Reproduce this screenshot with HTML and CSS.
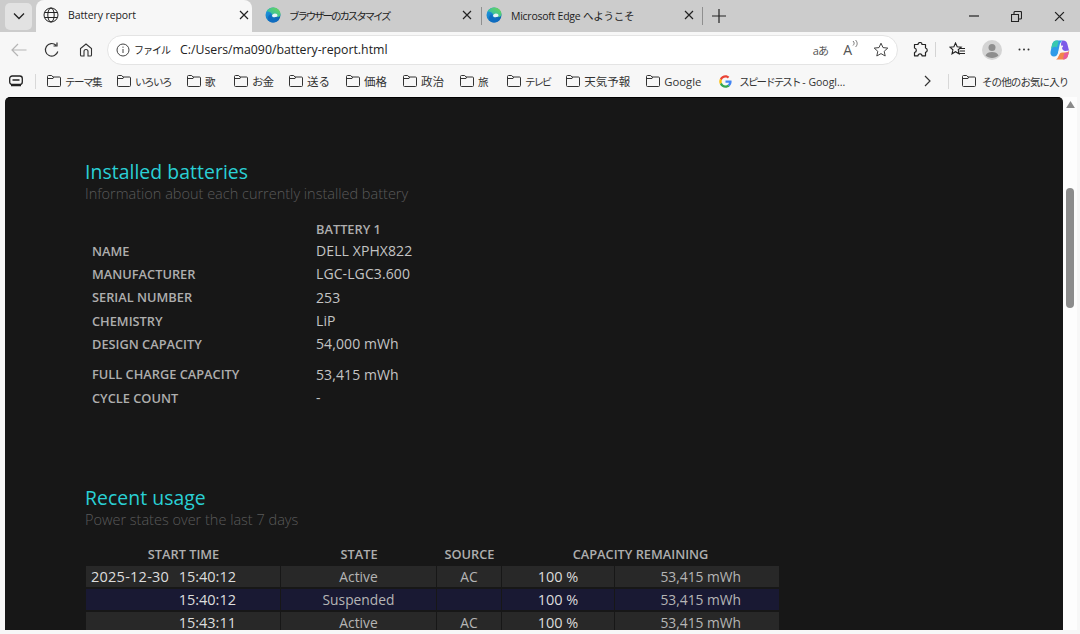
FILE: index.html
```html
<!DOCTYPE html>
<html lang="ja">
<head>
<meta charset="utf-8">
<title>Battery report</title>
<link rel="stylesheet" href="styles.css">
</head>
<body>
<svg class="defs" width="0" height="0" aria-hidden="true">
  <defs>
    <linearGradient id="edgeA" x1="0" y1="0" x2="1" y2="1"><stop offset="0" stop-color="#1f9fe6"/><stop offset="1" stop-color="#0c59a4"/></linearGradient>
    <linearGradient id="edgeB" x1="0" y1="1" x2="1" y2="0"><stop offset="0" stop-color="#1fb5c9"/><stop offset="1" stop-color="#6fd84e"/></linearGradient>
    <symbol id="edge" viewBox="0 0 16 16">
      <circle cx="8" cy="8" r="7.500" fill="url(#edgeA)"/>
      <path d="M1.500 4.500C3 2 5.500.5 8.500.5c4 0 7 3 7 6.500 0 1.500-.8 2.500-2 3L7.500 9C7.500 6.500 5 4.500 1.500 4.500z" fill="url(#edgeB)"/>
      <path d="M6.500 9.500c.5 2 2.500 3 4.500 3 1.300 0 2.500-.4 3.500-1.100-1 2.500-3.500 4.100-6.500 4.100-3 0-5-2-5-4.500 0-1.500 1-3 2.500-3.500 0 .5.300 1.300 1 2z" fill="#0f6cc0"/>
      <path d="M7 9c0-1.500 1.500-2.500 3-2.500s2.500 .8 2.500 2c0 .6-.3 1-.8 1.300C10 10.500 7.500 10.500 7 9z" fill="#e9f3f6"/>
    </symbol>
    <symbol id="folder" viewBox="0 0 16 14">
      <path d="M1.500 11.500V2.500a1 1 0 0 1 1-1h3.200l1.300 1.500h6.500a1 1 0 0 1 1 1v7.500a1 1 0 0 1-1 1h-11a1 1 0 0 1-1-1zM1.500 4.500H7l.6-1.400" fill="none" stroke="#333" stroke-width="1"/>
    </symbol>
    <symbol id="close" viewBox="0 0 10 10">
      <path d="M1 1l8 8M9 1l-8 8" fill="none" stroke="#222" stroke-width="1.200"/>
    </symbol>
  </defs>
</svg>

<header class="tabstrip">
  <div class="tablist-btn">
    <svg width="12" height="8" viewBox="0 0 12 8"><path d="M1 1.500l5 5 5-5" fill="none" stroke="#222" stroke-width="1.300"/></svg>
  </div>
  <div class="tab tab-active">
    <svg class="favicon" width="16" height="16" viewBox="0 0 16 16"><g fill="none" stroke="#222" stroke-width="1"><circle cx="8" cy="8" r="7"/><ellipse cx="8" cy="8" rx="3.200" ry="7"/><path d="M1.500 5.500h13M1.500 10.500h13"/></g></svg>
    <span class="tab-title">Battery report</span>
    <svg class="tab-close" width="10" height="10"><use href="#close"/></svg>
  </div>
  <div class="tab tab-second">
    <svg class="favicon" width="16" height="16"><use href="#edge"/></svg>
    <span class="tab-title">ブラウザーのカスタマイズ</span>
    <svg class="tab-close" width="10" height="10"><use href="#close"/></svg>
  </div>
  <div class="tab-sep"></div>
  <div class="tab tab-third">
    <svg class="favicon" width="16" height="16"><use href="#edge"/></svg>
    <span class="tab-title">Microsoft Edge へようこそ</span>
    <svg class="tab-close" width="10" height="10"><use href="#close"/></svg>
  </div>
  <div class="tab-sep"></div>
  <svg class="new-tab" width="14" height="14" viewBox="0 0 14 14"><path d="M7 0v14M0 7h14" stroke="#222" stroke-width="1.200"/></svg>
  <div class="window-controls">
    <svg width="10" height="10" viewBox="0 0 10 10"><path d="M0 5h10" stroke="#222" stroke-width="1.200"/></svg>
    <svg width="11" height="11" viewBox="0 0 11 11"><path d="M.5 3.500h7v7h-7zM3 3.500V1.500a1 1 0 0 1 1-1h5.500a1 1 0 0 1 1 1V7a1 1 0 0 1-1 1h-2" fill="none" stroke="#222" stroke-width="1.100"/></svg>
    <svg width="11" height="11" viewBox="0 0 10 10"><use href="#close"/></svg>
  </div>
</header>

<div class="toolbar">
  <svg class="tool-back" width="16" height="14" viewBox="0 0 16 14"><path d="M15.500 7H1M7 1L1 7l6 6" fill="none" stroke="#b5b5b5" stroke-width="1.200"/></svg>
  <svg class="tool-reload" width="16" height="16" viewBox="0 0 16 16"><path d="M13.800 9.500A6.300 6.300 0 1 1 12 3.200M13 .5v3.500H9.500" fill="none" stroke="#333" stroke-width="1.200"/></svg>
  <svg class="tool-home" width="14" height="14" viewBox="0 0 14 14"><path d="M5 13V8.500a2 2 0 0 1 4 0V13h2.500a1 1 0 0 0 1-1V5.500L7 1 1.500 5.500V12a1 1 0 0 0 1 1z" fill="none" stroke="#333" stroke-width="1.100"/></svg>
  <div class="address">
    <svg class="addr-info" width="14" height="14" viewBox="0 0 14 14"><circle cx="7" cy="7" r="6" fill="none" stroke="#444" stroke-width="1"/><path d="M7 6v4M7 3.600v1.200" stroke="#444" stroke-width="1"/></svg>
    <span class="addr-scheme">ファイル</span>
    <span class="addr-url">C:/Users/ma090/battery-report.html</span>
    <span class="addr-tools">
      <span class="addr-trans">aあ</span>
      <span class="addr-read">A<svg width="6" height="8" viewBox="0 0 6 8"><path d="M1 1c1.500 1.500 1.500 3 0 4.500M3.500 0c2.200 2.200 2.200 5 0 7" fill="none" stroke="#555" stroke-width=".8"/></svg></span>
      <svg width="16" height="16" viewBox="0 0 16 16"><path d="M8 1.200l2 4.400 4.800.5-3.600 3.200 1 4.700L8 11.600l-4.200 2.400 1-4.700L1.200 6.100 6 5.600z" fill="none" stroke="#444" stroke-width="1"/></svg>
    </span>
  </div>
  <svg class="tool-ext" width="16" height="16" viewBox="0 0 16 16"><path d="M6 2.500a2 2 0 0 1 4 0h3.500v3.500a2.200 2.200 0 0 1 0 4.300v3.500H10a2 2 0 0 0-4 0H2.500V10.500a2.300 2.300 0 0 0 0-4.500V2.500z" fill="none" stroke="#222" stroke-width="1.200" stroke-linejoin="round"/></svg>
  <div class="tool-sep"></div>
  <svg class="tool-fav" width="17" height="15" viewBox="0 0 17 15"><path d="M6.500 1l1.700 3.700 4 .4-3 2.700.9 4L6.500 9.700 3 11.800l.9-4-3-2.700 4-.4zM11 6.500h5M10.500 9h5.500M9.500 11.500H16" fill="none" stroke="#222" stroke-width="1.100"/></svg>
  <div class="avatar">
    <svg width="20" height="20" viewBox="0 0 20 20"><circle cx="10" cy="10" r="10" fill="#d4d4d4"/><circle cx="10" cy="7.500" r="3.500" fill="#8e8e8e"/><path d="M3.500 15.500c1-2.500 3.500-3.500 6.500-3.500s5.500 1 6.500 3.500c-1.500 1.500-4 2.500-6.500 2.500s-5-1-6.500-2.500z" fill="#8e8e8e"/></svg>
  </div>
  <svg class="tool-more" width="12" height="3" viewBox="0 0 12 3"><g fill="#333"><circle cx="1.500" cy="1.500" r="1"/><circle cx="6" cy="1.500" r="1"/><circle cx="10.500" cy="1.500" r="1"/></g></svg>
  <svg class="tool-copilot" width="22" height="22" viewBox="0 0 22 22">
    <path d="M8 1.500h6c-2 1-3 2.500-3.500 5L9 14c-.5 2-1.800 3.500-4 3.500-2.500 0-4-2-3.500-4.500l1.500-7C3.500 3.500 5 1.500 8 1.500z" fill="#2f9be8"/>
    <path d="M3 6C3.500 3.500 5 1.500 8 1.500c1 0 1.500.5 1.500 1.500L8 8.500C6 7 4 8 2 10z" fill="#38c9b0"/>
    <path d="M14 1.500c2.500 0 4 1.500 4.500 4l1.500 6-4 .5c-2-.5-3-1.500-3-3.500l-1-3C12 3 13 1.500 14 1.500z" fill="#7b5be8"/>
    <path d="M7 20.500h7c2.500 0 4.500-1.500 5-4l1.500-5.500c-.5 1.500-2 2.500-4 2.500h-3C11 13.500 10 15 9.500 17c-.5 2-1.500 3-2.500 3.500z" fill="#f1864a"/>
    <path d="M14 20.500c2.500 0 4.500-1.500 5-4l.8-3c-1 0-3 0-4.300.5-1 2-1 5-1.500 6.500z" fill="#e85a9b"/>
    <path d="M9 16.500c1-1.500 1.500-4 2.300-6.500.5-1.500 1.300-2.500 2.500-3" fill="none" stroke="#f4f4f4" stroke-width="1.600"/>
  </svg>
</div>

<nav class="bookmarks">
  <svg class="bm-apps" width="14" height="12" viewBox="0 0 14 12"><rect x=".7" y="1" width="12.600" height="8.500" rx="2.500" fill="none" stroke="#222" stroke-width="1.300"/><path d="M3.500 5h7M2 10.500h10" stroke="#222" stroke-width="1.300"/></svg>
  <div class="bm-sep"></div>
  <div class="bm-list">
    <span class="bm"><svg width="16" height="14"><use href="#folder"/></svg><span class="kana">テーマ集</span></span>
    <span class="bm"><svg width="16" height="14"><use href="#folder"/></svg><span class="kana">いろいろ</span></span>
    <span class="bm"><svg width="16" height="14"><use href="#folder"/></svg><span class="one">歌</span></span>
    <span class="bm"><svg width="16" height="14"><use href="#folder"/></svg><span class="okane">お金</span></span>
    <span class="bm"><svg width="16" height="14"><use href="#folder"/></svg><span>送る</span></span>
    <span class="bm"><svg width="16" height="14"><use href="#folder"/></svg><span>価格</span></span>
    <span class="bm"><svg width="16" height="14"><use href="#folder"/></svg><span>政治</span></span>
    <span class="bm"><svg width="16" height="14"><use href="#folder"/></svg><span class="one">旅</span></span>
    <span class="bm"><svg width="16" height="14"><use href="#folder"/></svg><span class="kana terebi">テレビ</span></span>
    <span class="bm"><svg width="16" height="14"><use href="#folder"/></svg><span>天気予報</span></span>
    <span class="bm"><svg width="16" height="14"><use href="#folder"/></svg><span class="latin">Google</span></span>
    <span class="bm bm-g"><svg width="13" height="13" viewBox="0 0 48 48"><path fill="#ea4335" d="M24 9.500c3.900 0 6.600 1.700 8.200 3.100l6-5.900C34.500 3.300 29.700 1 24 1 15 1 7.300 6.100 3.500 13.600l7 5.400C12.300 13.400 17.700 9.500 24 9.500z"/><path fill="#4285f4" d="M46.500 24.500c0-1.700-.2-3-.5-4.300H24v8.400h12.900c-.3 2.100-1.700 5.200-4.800 7.300l6.800 5.300c4.700-4.300 7.600-10.700 7.600-16.700z"/><path fill="#fbbc05" d="M10.500 28.700c-.5-1.400-.7-3-.7-4.700s.3-3.300.7-4.700l-7-5.500C2 16.900 1 20.300 1 24s.9 7.100 2.500 10.200z"/><path fill="#34a853" d="M24 47c6.200 0 11.400-2 15.200-5.600l-6.800-5.300c-2 1.300-4.500 2.300-8.400 2.300-6.300 0-11.700-3.900-13.500-10l-7 5.500C7.300 41.900 15 47 24 47z"/></svg><span class="bm-speed"><span class="kana speed-kana">スピードテスト</span> - Googl...</span></span>
  </div>
  <svg class="bm-more" width="7" height="12" viewBox="0 0 7 12"><path d="M1 1l5 5-5 5" fill="none" stroke="#333" stroke-width="1.200"/></svg>
  <div class="bm-sep bm-sep-right"></div>
  <span class="bm bm-other"><svg width="16" height="14"><use href="#folder"/></svg><span class="other-label">その他のお気に入り</span></span>
</nav>

<div class="viewport">
  <main class="page">
    <h2>Installed batteries</h2>
    <p class="sub">Information about each currently installed battery</p>
    <table class="batteries">
      <thead><tr><th></th><th class="b-head">BATTERY 1</th></tr></thead>
      <tbody>
        <tr><th>NAME</th><td>DELL XPHX822</td></tr>
        <tr><th>MANUFACTURER</th><td>LGC-LGC3.600</td></tr>
        <tr><th>SERIAL NUMBER</th><td>253</td></tr>
        <tr><th>CHEMISTRY</th><td>LiP</td></tr>
        <tr class="tall"><th>DESIGN CAPACITY</th><td>54,000 mWh</td></tr>
        <tr><th>FULL CHARGE CAPACITY</th><td>53,415 mWh</td></tr>
        <tr><th>CYCLE COUNT</th><td>-</td></tr>
      </tbody>
    </table>

    <h2 class="h-usage">Recent usage</h2>
    <p class="sub">Power states over the last 7 days</p>
    <table class="usage">
      <colgroup><col class="c1"><col class="c2"><col class="c3"><col class="c4"><col class="c5"></colgroup>
      <thead><tr><th>START TIME</th><th>STATE</th><th>SOURCE</th><th colspan="2">CAPACITY REMAINING</th></tr></thead>
      <tbody>
        <tr class="odd"><td class="time"><span class="date">2025-12-30</span>15:40:12</td><td class="c">Active</td><td class="c">AC</td><td class="c pct">100 %</td><td class="mwh">53,415 mWh</td></tr>
        <tr class="susp"><td class="time">15:40:12</td><td class="c">Suspended</td><td class="c"></td><td class="c pct">100 %</td><td class="mwh">53,415 mWh</td></tr>
        <tr class="odd"><td class="time">15:43:11</td><td class="c">Active</td><td class="c">AC</td><td class="c pct">100 %</td><td class="mwh">53,415 mWh</td></tr>
      </tbody>
    </table>
  </main>
  <div class="scrollbar">
    <svg width="9" height="7" viewBox="0 0 10 8"><path d="M5 0l5 8H0z" fill="#8a8a8a"/></svg>
    <div class="thumb"></div>
  </div>
</div>
<div class="bottom-edge"></div>
</body>
</html>
```

FILE: styles.css
```css
* { box-sizing: border-box; }
html, body { margin: 0; padding: 0; }
body {
  width: 1080px;
  height: 634px;
  overflow: hidden;
  background: #f7f7f7;
  font-family: "Open Sans", "Noto Sans CJK JP", sans-serif;
  color: #222;
  display: flex;
  flex-direction: column;
}
.defs { position: absolute; }

.tabstrip {
  height: 32px;
  flex: none;
  background: #cccccc;
  display: flex;
  align-items: center;
  font-size: 10.500px;
}
.tablist-btn {
  width: 27px;
  height: 27px;
  margin-left: 5px;
  margin-right: 4px;
  background: #e2e2e2;
  border-radius: 5px;
  display: flex;
  align-items: center;
  justify-content: center;
}
.tab {
  height: 32px;
  display: flex;
  align-items: center;
  flex: none;
}
.tab-active {
  width: 216px;
  background: #f7f7f7;
  border-radius: 8px 8px 0 0;
  padding: 0 3px 2px 7px;
  margin-right: 4px;
}
.tab-second { width: 225px; padding: 0 9px 2px 9px; }
.tab-third { width: 220px; padding: 0 8px 2px 4px; }
.favicon { flex: none; }
.tab-title {
  flex: 1;
  margin-left: 9px;
  white-space: nowrap;
  letter-spacing: -.1px;
}
.tab-second .tab-title { letter-spacing: -2.100px; font-size: 10.500px; margin-left: 8px; }
.tab-third .tab-title { letter-spacing: -.25px; }
.tab-close { flex: none; }
.tab-sep { width: 1px; height: 18px; background: #8f8f8f; flex: none; }
.new-tab { margin-left: 9px; flex: none; }
.window-controls {
  margin-left: auto;
  width: 96px;
  margin-right: 15px;
  display: flex;
  justify-content: space-between;
  align-items: center;
}

.toolbar {
  height: 35px;
  flex: none;
  display: flex;
  align-items: center;
  background: #f7f7f7;
}
.tool-back { margin-left: 11px; }
.tool-reload { margin-left: 17px; }
.tool-home { margin-left: 19px; }
.address {
  margin-left: 14px;
  width: 791px;
  height: 30px;
  background: #fff;
  border: 1px solid #e4e4e4;
  border-radius: 15px;
  display: flex;
  align-items: center;
  padding: 0 8px 0 8px;
  font-size: 12.300px;
}
.addr-info { flex: none; }
.addr-scheme {
  flex: none;
  margin-left: 4px;
  width: 46px;
  font-size: 10px;
  letter-spacing: -1px;
}
.addr-url { color: #222; }
.addr-tools {
  margin-left: auto;
  display: flex;
  align-items: center;
  gap: 15px;
  color: #555;
}
.addr-trans { font-size: 11px; letter-spacing: -.8px; }
.addr-read { font-size: 14px; display: flex; align-items: flex-start; }
.tool-ext { margin-left: 14px; }
.tool-sep { width: 1px; height: 15px; background: #d4d4d4; margin-left: 7px; }
.tool-fav { margin-left: 13px; }
.avatar { margin-left: 16px; width: 20px; height: 20px; display: flex; }
.tool-more { margin-left: 16px; }
.tool-copilot { margin-left: 19px; }

.bookmarks {
  height: 30px;
  flex: none;
  background: #f7f7f7;
  display: flex;
  align-items: center;
  padding-bottom: 2px;
  font-size: 11.500px;
  color: #333;
}
.bm-apps { margin-left: 9px; flex: none; }
.bm-sep { width: 1px; height: 15px; background: #d8d8d8; margin-left: 12px; flex: none; }
.bm-list { display: flex; gap: 15px; margin-left: 10px; width: 797px; flex: none; }
.bm { display: flex; align-items: center; gap: 3px; white-space: nowrap; }
.bm-g { gap: 7px; margin-left: 3px; }
.one { font-size: 10.500px; padding-right: 2.500px; }
.okane { letter-spacing: -1px; }
.latin { font-size: 11.300px; }
.bm-speed { font-size: 10.500px; }
.kana { font-size: 10.500px; letter-spacing: -1.500px; }
.terebi { letter-spacing: -2.100px; }
.speed-kana { letter-spacing: -1.900px; }
.bm-more { margin-left: 81px; flex: none; }
.bm-sep-right { margin-left: 17px; }
.bm-other { margin-left: 12px; gap: 5px; font-size: 10.500px; }
.other-label { letter-spacing: -.9px; }

.viewport {
  height: 533px;
  flex: none;
  display: flex;
  background: #f7f7f7;
}
.page {
  margin-left: 5px;
  width: 1058px;
  height: 533px;
  background: #171717;
  border-radius: 5px 5px 0 0;
  border-top: 1px solid #000;
  padding: 61px 0 0 80px;
  overflow: hidden;
  color: #c9c9c9;
  font-size: 13.800px;
}
h2 {
  margin: 0;
  font-size: 19.400px;
  line-height: 26px;
  font-weight: 400;
  color: #2ad0d5;
  letter-spacing: .05px;
}
.sub {
  margin: 0;
  font-size: 14.500px;
  line-height: 18px;
  font-weight: 300;
  color: #5a5a5a;
}
.h-usage { margin-top: 76px; }
table { border-collapse: separate; border-spacing: 0; }

.batteries { margin-top: 16px; table-layout: fixed; width: 420px; }
.batteries th {
  text-align: left;
  font-size: 12.800px;
  font-weight: 600;
  color: #aeaeae;
  padding: 0 0 0 7px;
  width: 231px;
  height: 23.300px;
}
.batteries thead th { height: 20px; }
.batteries td { padding: 0; color: #c4c4c4; height: 23.300px; font-size: 14px; letter-spacing: .1px; }
.batteries th.b-head { padding: 0; width: auto; color: #aeaeae; }
.batteries .tall td, .batteries .tall th { height: 30.500px; padding-bottom: 7px; }

.usage { margin: 15px 0 0 1px; table-layout: fixed; width: 693px; }
.c1 { width: 195px; }
.c2 { width: 156px; }
.c3 { width: 65px; }
.c4 { width: 113px; }
.c5 { width: 164px; }
.usage thead th {
  font-size: 12.800px;
  font-weight: 600;
  color: #aeaeae;
  height: 22px;
  padding: 0 0 2px;
  text-align: center;
}
.usage td {
  height: 21px;
  padding: 0;
  line-height: 21px;
  border-bottom: 2px solid #171717;
  box-sizing: content-box;
  border-right: 1px solid #171717;
  white-space: nowrap;
}
.usage td:last-child { border-right: 0; }
.odd td { background: #282828; }
.susp td { background: #191933; }
.time { text-align: right; padding-right: 44px !important; color: #ddd; font-size: 14.500px; }
.date { float: left; padding-left: 5px; letter-spacing: .25px; }
.c { text-align: center; color: #b5b5b5; }
.pct { color: #dcdcdc; font-size: 14.500px; }
.mwh { text-align: right; padding-right: 38px !important; color: #b5b5b5; }

.scrollbar {
  width: 14px;
  flex: none;
  background: #fdfdfd;
  display: flex;
  flex-direction: column;
  align-items: center;
  padding-top: 4px;
}
.thumb {
  width: 8px;
  height: 120px;
  background: #8c8c8c;
  border-radius: 4px;
  margin-top: 80px;
}
.bottom-edge { flex: 1; background: #f7f7f7; }
```
